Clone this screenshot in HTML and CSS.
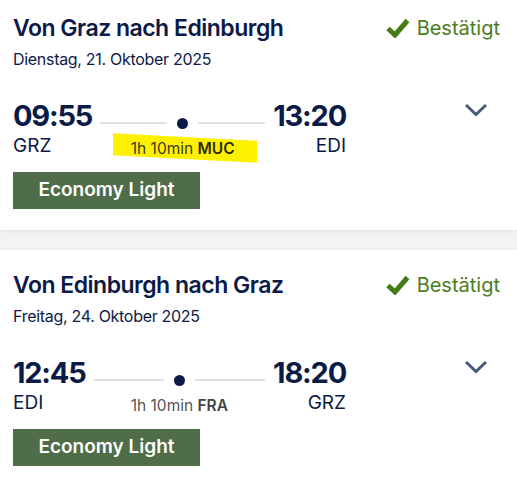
FILE: index.html
```html
<!DOCTYPE html>
<html lang="de">
<head>
    <meta charset="UTF-8">
    <meta name="viewport" content="width=device-width, initial-scale=1.0">
    <title>Meine Flüge</title>
    <link rel="stylesheet" href="styles.css">
</head>
<body>
    <div class="trips">
        <div class="trip">
            <div class="trip-head">
                <div>
                    <h2>Von Graz nach Edinburgh</h2>
                    <p class="date">Dienstag, 21. Oktober 2025</p>
                </div>
                <div class="status">
                    <svg width="24" height="20" viewBox="0 0 24 20"><path d="M2 10.5 L9 17 L21.5 2.5" fill="none" stroke="#437c17" stroke-width="5" stroke-linejoin="miter"/></svg>
                    Bestätigt
                </div>
            </div>
            <div class="flight">
                <div class="times">
                    <span class="time">09:55</span>
                    <span class="route"><i class="line"></i><i class="dot"></i><i class="line"></i></span>
                    <span class="time arr">13:20</span>
                    <span class="code">GRZ</span>
                    <span class="duration marked">1h 10min <b>MUC</b></span>
                    <span class="code arr">EDI</span>
                </div>
                <svg class="chevron" width="24" height="14" viewBox="0 0 24 14"><path d="M2 2 L12 11.5 L22 2" fill="none" stroke="#4a5879" stroke-width="3"/></svg>
            </div>
            <div class="fare">Economy Light</div>
        </div>

        <div class="trip">
            <div class="trip-head">
                <div>
                    <h2>Von Edinburgh nach Graz</h2>
                    <p class="date">Freitag, 24. Oktober 2025</p>
                </div>
                <div class="status">
                    <svg width="24" height="20" viewBox="0 0 24 20"><path d="M2 10.5 L9 17 L21.5 2.5" fill="none" stroke="#437c17" stroke-width="5" stroke-linejoin="miter"/></svg>
                    Bestätigt
                </div>
            </div>
            <div class="flight">
                <div class="times">
                    <span class="time">12:45</span>
                    <span class="route"><i class="line"></i><i class="dot"></i><i class="line"></i></span>
                    <span class="time arr">18:20</span>
                    <span class="code">EDI</span>
                    <span class="duration">1h 10min <b>FRA</b></span>
                    <span class="code arr">GRZ</span>
                </div>
                <svg class="chevron" width="24" height="14" viewBox="0 0 24 14"><path d="M2 2 L12 11.5 L22 2" fill="none" stroke="#4a5879" stroke-width="3"/></svg>
            </div>
            <div class="fare">Economy Light</div>
        </div>
    </div>
</body>
</html>
```

FILE: styles.css
```css
body {
    margin: 0;
    font-family: Inter, "Noto Sans", sans-serif;
    background-color: #f3f3f3;
    color: #0c1a47;
}
.trips {
    margin-top: -7px;
    display: flex;
    flex-direction: column;
    gap: 20px;
}
.trip {
    background: white;
    padding: 20px 17px 21px 13px;
    box-shadow: 0 1px 4px rgba(0, 0, 0, 0.08);
}
.trip-head {
    display: flex;
    justify-content: space-between;
    align-items: flex-start;
}
.trip-head h2 {
    margin: 0;
    font-size: 23px;
    line-height: 30px;
    font-weight: 600;
    letter-spacing: -0.5px;
}
.date {
    margin: 5px 0 0;
    font-size: 16px;
    line-height: 22px;
    letter-spacing: -0.3px;
}
.status {
    display: flex;
    align-items: center;
    gap: 7px;
    font-size: 20px;
    line-height: 30px;
    color: #4a7d1c;
}
.flight {
    display: flex;
    align-items: flex-start;
    justify-content: space-between;
    margin-top: 29px;
}
.times {
    display: grid;
    grid-template-columns: auto 1fr auto;
    width: 333px;
    column-gap: 8px;
    row-gap: 2px;
}
.time {
    font-size: 29px;
    line-height: 34px;
    font-weight: 700;
    letter-spacing: -1.2px;
    white-space: nowrap;
}
.arr {
    text-align: right;
}
.route {
    display: flex;
    align-items: center;
    gap: 10px;
    padding-top: 14px;
    height: 20px;
}
.line {
    flex: 1;
    height: 2px;
    background: #dfe1e6;
}
.dot {
    width: 11px;
    height: 11px;
    border-radius: 50%;
    background: #0c1a47;
}
.code {
    font-size: 19px;
    line-height: 22px;
}
.duration {
    position: relative;
    z-index: 0;
    justify-self: center;
    padding-top: 3px;
    font-size: 15.5px;
    line-height: 22px;
    color: #555;
}
.duration b {
    font-weight: 600;
    color: #444;
}
.duration.marked {
    color: #3d3d1c;
}
.duration.marked b {
    color: #2a2a10;
}
.duration.marked::before {
    content: "";
    position: absolute;
    left: -18px;
    right: -22px;
    top: 2px;
    height: 22px;
    background: #fff000;
    transform: skewY(3deg);
    z-index: -1;
}
.chevron {
    margin-top: 4px;
    margin-right: 12px;
}
.fare {
    margin-top: 12px;
    width: 187px;
    height: 37px;
    line-height: 36px;
    text-align: center;
    background: #4e6d48;
    color: white;
    font-size: 19px;
    font-weight: 600;
}
```
